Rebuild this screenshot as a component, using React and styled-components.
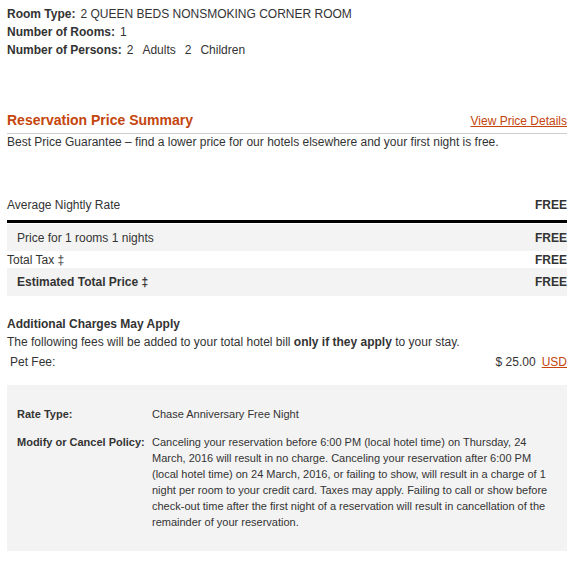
import React from "react";
import styled, { createGlobalStyle } from "styled-components";

const GlobalStyle = createGlobalStyle`
  body {
    margin: 0;
    background: #fff;
    font-family: "Liberation Sans", Arial, sans-serif;
    font-size: 12px;
    color: #333;
  }
`;

const ACCENT = "#c4450d";

const Page = styled.div`
  width: 560px;
  padding: 5px 8px 0 7px;
`;

const InfoList = styled.div`
  display: flex;
  flex-direction: column;
`;

const InfoLine = styled.div`
  line-height: 18px;
`;

const Label = styled.span`
  font-weight: bold;
  margin-right: 5px;
`;

const Gap = styled.span`
  margin-left: ${(p) => p.$w || 9}px;
`;

const SectionHeader = styled.div`
  margin-top: 52px;
  display: flex;
  justify-content: space-between;
  align-items: baseline;
  padding-bottom: 4px;
  border-bottom: 1px solid #cccccc;
`;

const Title = styled.h2`
  margin: 0;
  font-size: 14px;
  line-height: 18px;
  font-weight: bold;
  color: ${ACCENT};
`;

const Link = styled.a`
  font-size: 12px;
  color: ${ACCENT};
  text-decoration: underline;
  cursor: pointer;
`;

const Note = styled.p`
  margin: 0;
  line-height: 16px;
`;

const AverageRow = styled.div`
  margin-top: 40px;
  height: 30px;
  display: flex;
  align-items: center;
  justify-content: space-between;
  border-bottom: 3px solid #000;
  margin-bottom: 1px;
`;

const PriceRow = styled.div`
  height: ${(p) => p.$h}px;
  display: flex;
  align-items: center;
  justify-content: space-between;
  padding-left: ${(p) => (p.$indent ? 10 : 0)}px;
  background: ${(p) => (p.$shaded ? "#f3f3f3" : "transparent")};
  font-weight: ${(p) => (p.$bold ? "bold" : "normal")};
`;

const Amount = styled.span`
  font-weight: bold;
`;

const ChargesTitle = styled.div`
  margin-top: 19px;
  font-weight: bold;
  line-height: 18px;
`;

const ChargesText = styled.div`
  line-height: 18px;
`;

const FeeRow = styled.div`
  margin-top: 2px;
  line-height: 18px;
  padding-left: 3px;
  display: flex;
  justify-content: space-between;
`;

const Currency = styled(Link)`
  margin-left: 6px;
`;

const PolicyBox = styled.div`
  margin-top: 14px;
  background: #f3f3f3;
  padding: 21px 10px 21px 10px;
  display: grid;
  grid-template-columns: 135px 1fr;
  row-gap: 12px;
  font-size: 11px;
  line-height: 16px;
`;

const PolicyLabel = styled.div`
  font-weight: bold;
`;

const PolicyValue = styled.div`
  padding-right: 4px;
`;

export default function App() {
  return (
    <>
      <GlobalStyle />
      <Page>
        <InfoList>
          <InfoLine>
            <Label>Room Type:</Label>2 QUEEN BEDS NONSMOKING CORNER ROOM
          </InfoLine>
          <InfoLine>
            <Label>Number of Rooms:</Label>1
          </InfoLine>
          <InfoLine>
            <Label>Number of Persons:</Label>2<Gap>Adults</Gap>
            <Gap>2</Gap>
            <Gap>Children</Gap>
          </InfoLine>
        </InfoList>

        <SectionHeader>
          <Title>Reservation Price Summary</Title>
          <Link>View Price Details</Link>
        </SectionHeader>
        <Note>
          Best Price Guarantee – find a lower price for our hotels elsewhere and
          your first night is free.
        </Note>

        <AverageRow>
          <span>Average Nightly Rate</span>
          <Amount>FREE</Amount>
        </AverageRow>
        <PriceRow $h={27} $shaded $indent>
          <span>Price for 1 rooms 1 nights</span>
          <Amount>FREE</Amount>
        </PriceRow>
        <PriceRow $h={17}>
          <span>Total Tax ‡</span>
          <Amount>FREE</Amount>
        </PriceRow>
        <PriceRow $h={28} $shaded $indent $bold>
          <span>Estimated Total Price ‡</span>
          <Amount>FREE</Amount>
        </PriceRow>

        <ChargesTitle>Additional Charges May Apply</ChargesTitle>
        <ChargesText>
          The following fees will be added to your total hotel bill{" "}
          <b>only if they apply</b> to your stay.
        </ChargesText>
        <FeeRow>
          <span>Pet Fee:</span>
          <span>
            $ 25.00<Currency>USD</Currency>
          </span>
        </FeeRow>

        <PolicyBox>
          <PolicyLabel>Rate Type:</PolicyLabel>
          <PolicyValue>Chase Anniversary Free Night</PolicyValue>
          <PolicyLabel>Modify or Cancel Policy:</PolicyLabel>
          <PolicyValue>
            Canceling your reservation before 6:00 PM (local hotel time) on
            Thursday, 24 March, 2016 will result in no charge. Canceling your
            reservation after 6:00 PM (local hotel time) on 24 March, 2016, or
            failing to show, will result in a charge of 1 night per room to your
            credit card. Taxes may apply. Failing to call or show before
            check-out time after the first night of a reservation will result in
            cancellation of the remainder of your reservation.
          </PolicyValue>
        </PolicyBox>
      </Page>
    </>
  );
}
